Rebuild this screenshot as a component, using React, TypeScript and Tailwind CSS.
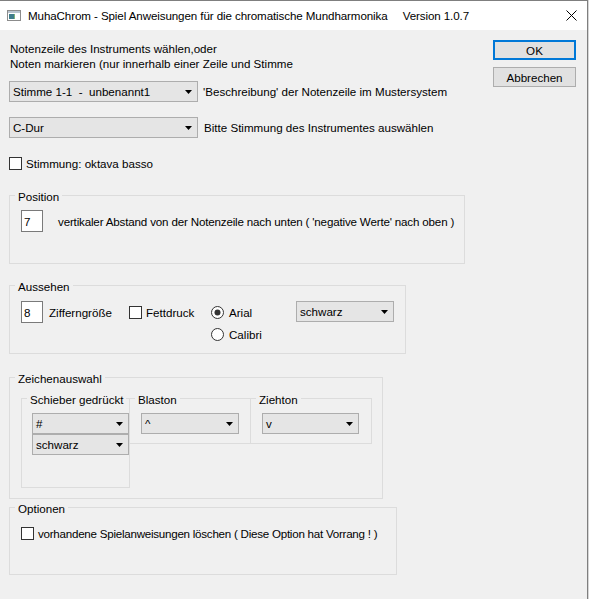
import type { ReactNode } from 'react';

/**
 * Drop-down list in the Windows dialog look
 */
function Combo({ value, className = '' }: { value: string; className?: string }) {
  return (
    <div
      className={`flex h-[21px] shrink-0 items-center justify-between border border-[#adadad] bg-[#e5e5e5] pl-[3px] pr-[5px] ${className}`}
    >
      <span className="whitespace-pre">{value}</span>
      <svg width="7" height="4" viewBox="0 0 7 4">
        <path d="M0 0h7L3.5 4z" fill="#000" />
      </svg>
    </div>
  );
}

function CheckBox() {
  return <span className="block h-[13px] w-[13px] shrink-0 border border-[#333333] bg-white" />;
}

function Radio({ checked = false }: { checked?: boolean }) {
  return (
    <svg width="13" height="13" viewBox="0 0 13 13" className="shrink-0">
      <circle cx="6.5" cy="6.5" r="6" fill="#fff" stroke="#333" />
      {checked && <circle cx="6.5" cy="6.5" r="3" fill="#333" />}
    </svg>
  );
}

function TextBox({ value }: { value: string }) {
  return (
    <div className="flex h-[22px] w-[22px] shrink-0 items-center border border-[#7a7a7a] bg-white pl-[2px]">
      {value}
    </div>
  );
}

/**
 * Group box: a thin frame with its caption sitting on the top line
 */
function GroupBox({
  title,
  className = '',
  children,
}: {
  title: string;
  className?: string;
  children?: ReactNode;
}) {
  return (
    <div className={`relative shrink-0 border border-[#dcdcdc] ${className}`}>
      <span className="absolute left-[5px] top-[-6px] whitespace-nowrap bg-[#f0f0f0] px-[3px] leading-[14px]">
        {title}
      </span>
      {children}
    </div>
  );
}

function TitleBar() {
  return (
    <div className="flex h-[29px] shrink-0 items-center whitespace-nowrap bg-white tracking-[-0.1px]">
      {/* app icon */}
      <svg width="14" height="11" viewBox="0 0 14 11" className="ml-[7px] shrink-0">
        <rect x="0.5" y="0.5" width="13" height="10" fill="#fff" stroke="#8c8c8c" />
        <rect x="1" y="1" width="12" height="2" fill="#b9c4cf" />
        <rect x="2" y="4" width="5" height="5" fill="#3f7d8c" />
        <rect x="7" y="4" width="1" height="5" fill="#7fb37a" />
      </svg>
      <span className="ml-[7px]">MuhaChrom - Spiel Anweisungen für die chromatische Mundharmonika</span>
      <span className="ml-[15px]">Version 1.0.7</span>
      {/* close */}
      <svg width="11" height="11" viewBox="0 0 11 11" className="ml-auto mr-[10px] shrink-0">
        <path d="M0.5 0.5l10 10M10.5 0.5l-10 10" stroke="#000" strokeWidth="1" />
      </svg>
    </div>
  );
}

export default function App() {
  return (
    <div className="flex h-[599px] w-[589px] bg-[#d6d6d6] font-['Liberation_Sans',Arial,sans-serif] text-[11.6px] leading-[15px] text-black">
      <div className="flex w-[588px] flex-col border-r border-t border-[#7f7f7f] bg-[#f0f0f0]">
        <TitleBar />

        <div className="flex flex-1">
          {/* Form fields */}
          <div className="flex flex-col whitespace-nowrap pl-[9px] pt-[11px]">
            <p className="pl-px">
              Notenzeile des Instruments wählen,oder
              <br />
              Noten markieren (nur innerhalb einer Zeile und Stimme
            </p>

            <div className="mt-[10px] flex items-center">
              <Combo value="Stimme 1-1  -  unbenannt1" className="w-[189px]" />
              <span className="ml-[5px]">'Beschreibung' der Notenzeile im Mustersystem</span>
            </div>

            <div className="mt-[15px] flex items-center">
              <Combo value="C-Dur" className="w-[189px]" />
              <span className="ml-[6px]">Bitte Stimmung des Instrumentes auswählen</span>
            </div>

            <label className="mt-[18px] flex items-center">
              <CheckBox />
              <span className="ml-[4px]">Stimmung: oktava basso</span>
            </label>

            <GroupBox title="Position" className="mt-[24px] h-[69px] w-[456px]">
              <div className="flex items-center pl-[11px] pt-[14px]">
                <TextBox value="7" />
                <span className="ml-[15px] tracking-[-0.17px]">
                  vertikaler Abstand von der Notenzeile nach unten ( 'negative Werte' nach oben )
                </span>
              </div>
            </GroupBox>

            <GroupBox title="Aussehen" className="mt-[21px] h-[69px] w-[397px]">
              <div className="flex items-start pl-[11px] pt-[15px]">
                <div className="flex w-[108px] items-center">
                  <TextBox value="8" />
                  <span className="ml-[6px]">Zifferngröße</span>
                </div>
                <label className="flex h-[22px] w-[82px] items-center">
                  <CheckBox />
                  <span className="ml-[4px]">Fettdruck</span>
                </label>
                <div className="flex w-[85px] flex-col">
                  <label className="flex h-[22px] items-center">
                    <Radio checked />
                    <span className="ml-[5px]">Arial</span>
                  </label>
                  <label className="flex h-[22px] items-center">
                    <Radio />
                    <span className="ml-[5px]">Calibri</span>
                  </label>
                </div>
                <Combo value="schwarz" className="w-[98px]" />
              </div>
            </GroupBox>

            <GroupBox title="Zeichenauswahl" className="mt-[23px] h-[122px] w-[374px]">
              <div className="flex items-start pl-[11px] pt-[20px]">
                <GroupBox title="Schieber gedrückt" className="h-[90px] w-[109px]">
                  <div className="flex flex-col pl-[10px] pt-[14px]">
                    <Combo value="#" className="w-[97px]" />
                    <Combo value="schwarz" className="w-[97px]" />
                  </div>
                </GroupBox>
                <GroupBox title="Blaston" className="-ml-px h-[46px] w-[122px]">
                  <div className="pl-[11px] pt-[14px]">
                    <Combo value="^" className="w-[98px]" />
                  </div>
                </GroupBox>
                <GroupBox title="Ziehton" className="-ml-px h-[46px] w-[122px]">
                  <div className="pl-[11px] pt-[14px]">
                    <Combo value="v" className="w-[97px]" />
                  </div>
                </GroupBox>
              </div>
            </GroupBox>

            <GroupBox title="Optionen" className="mt-[8px] h-[68px] w-[388px]">
              <label className="flex items-center pl-[11px] pt-[18px]">
                <CheckBox />
                <span className="ml-[4px] tracking-[-0.25px]">
                  vorhandene Spielanweisungen löschen ( Diese Option hat Vorrang ! )
                </span>
              </label>
            </GroupBox>
          </div>

          {/* Dialog buttons */}
          <div className="ml-auto mr-[11px] flex w-[83px] shrink-0 flex-col pt-[10px]">
            <button className="h-[20px] border-2 border-[#0078d7] bg-[#e1e1e1]">OK</button>
            <button className="mt-[7px] h-[20px] border border-[#adadad] bg-[#e1e1e1]">Abbrechen</button>
          </div>
        </div>
      </div>
    </div>
  );
}
